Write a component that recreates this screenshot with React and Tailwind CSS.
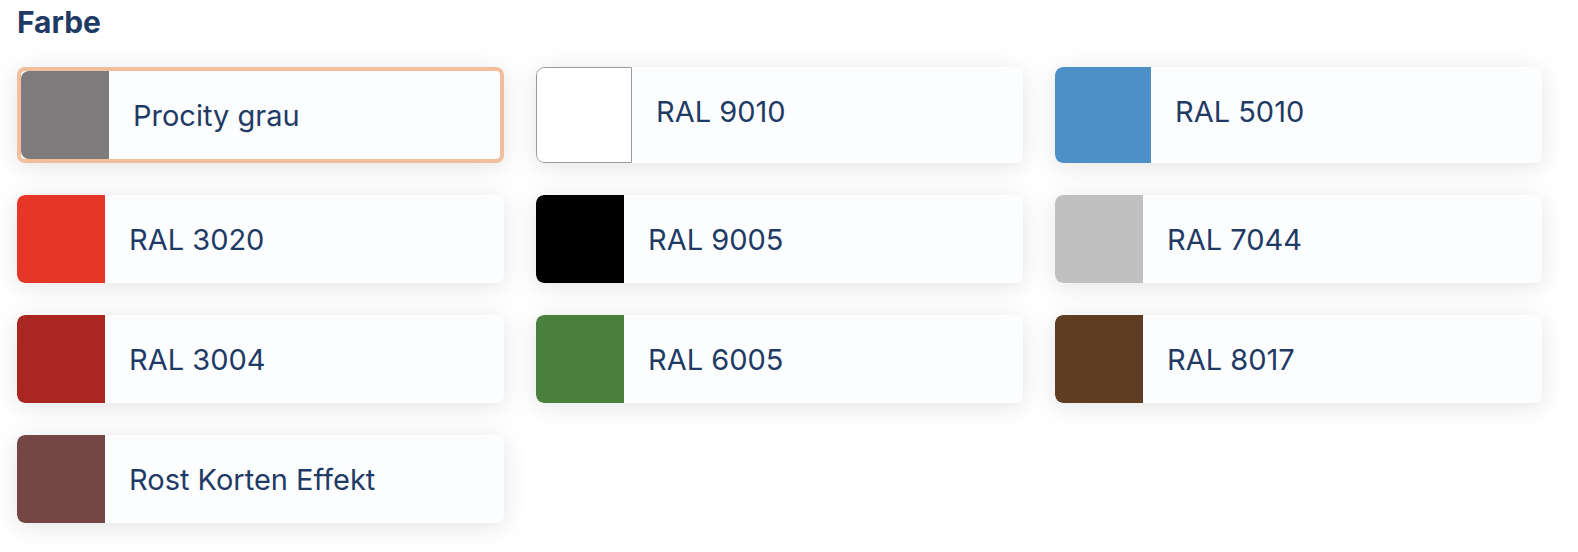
import React from 'react';

const colors = [
    { name: 'Procity grau', hex: '#7d7b7b' },
    { name: 'RAL 9010', hex: '#ffffff', outlined: true },
    { name: 'RAL 5010', hex: '#4d90c8' },
    { name: 'RAL 3020', hex: '#e63628' },
    { name: 'RAL 9005', hex: '#000000' },
    { name: 'RAL 7044', hex: '#c0c0c0' },
    { name: 'RAL 3004', hex: '#a92720' },
    { name: 'RAL 6005', hex: '#4b7f3d' },
    { name: 'RAL 8017', hex: '#5e3d22' },
    { name: 'Rost Korten Effekt', hex: '#744645' },
];

const ColorOption = ({ color, selected }) => (
    <button
        className={`flex overflow-hidden rounded-lg bg-[#fcfdfe] text-left shadow-[0_4px_26px_rgba(0,0,0,0.11)] ${
            selected ? 'border-4 border-[#f2be9b]' : ''
        }`}
    >
        {/* Swatch follows the card height, so it stays square */}
        <div
            className={`h-full aspect-square shrink-0 rounded-l-lg ${color.outlined ? 'border border-[#9a9a9a]' : ''}`}
            style={{ backgroundColor: color.hex }}
        />
        <div className="flex h-[88px] items-center pl-6">
            <span className="text-[29px] leading-none text-[#1f3b65]">{color.name}</span>
        </div>
    </button>
);

export default function App() {
    const selected = 'Procity grau';

    return (
        <div className="min-h-[552px] bg-white pl-[17px] pr-[36px] pt-[7px] font-['Inter',sans-serif]">
            <h2 className="mb-[30px] text-[30px] font-bold leading-[30px] text-[#1f3b65]">Farbe</h2>
            <div className="grid grid-cols-3 gap-8">
                {colors.map((c) => (
                    <ColorOption key={c.name} color={c} selected={c.name === selected} />
                ))}
            </div>
        </div>
    );
}
